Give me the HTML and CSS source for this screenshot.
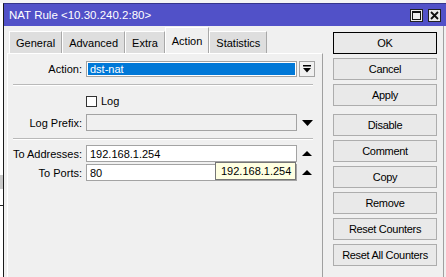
FILE: index.html
```html
<!DOCTYPE html>
<html lang="en">
<head>
    <meta charset="UTF-8">
    <meta name="viewport" content="width=device-width, initial-scale=1.0">
    <title>NAT Rule</title>
    <link rel="stylesheet" href="styles.css">
</head>
<body>
    <div class="desk">
        <div class="edge"></div>
        <div class="window">
            <div class="titlebar">
                <span class="title">NAT Rule &lt;10.30.240.2:80&gt;</span>
                <div class="winbtns">
                    <span class="wbtn">
                        <svg width="9" height="9" viewBox="0 0 9 9"><rect x="0.5" y="0.5" width="8" height="8" fill="none" stroke="#111"/><rect x="0" y="0" width="9" height="2" fill="#111"/></svg>
                    </span>
                    <span class="wbtn">
                        <svg width="9" height="9" viewBox="0 0 9 9"><path d="M1 1 L8 8 M8 1 L1 8" stroke="#111" stroke-width="1.8"/></svg>
                    </span>
                </div>
            </div>
            <div class="content">
                <div class="main">
                    <div class="tabs">
                        <div class="tab">General</div>
                        <div class="tab">Advanced</div>
                        <div class="tab">Extra</div>
                        <div class="tab active">Action</div>
                        <div class="tab">Statistics</div>
                    </div>
                    <div class="page">
                        <div class="row row-action">
                            <label class="lbl">Action:</label>
                            <div class="field select"><span class="picked">dst-nat</span></div>
                            <div class="trigger boxed">
                                <svg width="8" height="8" viewBox="0 0 8 8"><rect x="0" y="0" width="8" height="1.5" fill="#000"/><path d="M0 3 L8 3 L4 7.5 Z" fill="#000"/></svg>
                            </div>
                        </div>
                        <div class="sep sep1"></div>
                        <div class="row row-log">
                            <span class="lbl"></span>
                            <span class="check"></span>
                            <span class="check-text">Log</span>
                        </div>
                        <div class="row row-prefix">
                            <label class="lbl">Log Prefix:</label>
                            <div class="field disabled"></div>
                            <div class="trigger">
                                <svg width="11" height="6" viewBox="0 0 11 6"><path d="M0 0 L11 0 L5.5 6 Z" fill="#000"/></svg>
                            </div>
                        </div>
                        <div class="sep sep2"></div>
                        <div class="row row-addr">
                            <label class="lbl">To Addresses:</label>
                            <div class="field">192.168.1.254</div>
                            <div class="trigger">
                                <svg width="10" height="5" viewBox="0 0 10 5"><path d="M0 5 L10 5 L5 0 Z" fill="#000"/></svg>
                            </div>
                        </div>
                        <div class="row row-ports">
                            <label class="lbl">To Ports:</label>
                            <div class="field">80</div>
                            <div class="trigger">
                                <svg width="10" height="5" viewBox="0 0 10 5"><path d="M0 5 L10 5 L5 0 Z" fill="#000"/></svg>
                            </div>
                        </div>
                        <div class="tooltip">192.168.1.254</div>
                    </div>
                </div>
                <div class="side">
                    <button class="btn default">OK</button>
                    <button class="btn">Cancel</button>
                    <button class="btn">Apply</button>
                    <button class="btn gap">Disable</button>
                    <button class="btn">Comment</button>
                    <button class="btn">Copy</button>
                    <button class="btn">Remove</button>
                    <button class="btn">Reset Counters</button>
                    <button class="btn">Reset All Counters</button>
                </div>
            </div>
        </div>
    </div>
</body>
</html>
```

FILE: styles.css
```css
body {
    margin: 0;
    font-family: "Liberation Sans", Arial, sans-serif;
    font-size: 11px;
    color: #000;
    background: #fff;
    overflow: hidden;
}
.desk {
    display: flex;
    height: 277px;
    padding-top: 3px;
    box-sizing: border-box;
    background: #f4f4f4;
}
.edge {
    width: 3px;
    flex: none;
    background: linear-gradient(#fff 0, #fff 172px, #c9c9c9 172px, #c9c9c9 186px, #fff 186px, #fff 202px, #222 202px, #222 203px, #fff 203px);
}
.window {
    flex: 1;
    display: flex;
    flex-direction: column;
    border-left: 1px solid #1a1a1a;
    border-top: 1px solid #35358c;
    background: #f0f0f0;
}
.titlebar {
    height: 22px;
    flex: none;
    display: flex;
    align-items: center;
    padding: 0 5px;
    background: #5151c8;
    color: #fff;
    font-size: 11.5px;
}
.title {
    flex: 1;
}
.winbtns {
    display: flex;
    gap: 5px;
}
.wbtn {
    width: 11px;
    height: 11px;
    border: 1px solid #222;
    background: #ececec;
    display: flex;
    align-items: center;
    justify-content: center;
}
.content {
    flex: 1;
    display: flex;
    margin-right: 2px;
    border-right: 1px solid #a0a0a0;
}
.main {
    display: flex;
    flex-direction: column;
    padding-left: 3px;
}
.tabs {
    height: 27px;
    display: flex;
    align-items: flex-end;
    padding-left: 2px;
}
.tab {
    height: 22px;
    box-sizing: border-box;
    padding: 0 6px;
    display: flex;
    align-items: center;
    background: #dedede;
    border: 1px solid #fff;
    border-right-color: #a8a8a8;
    border-bottom: none;
}
.tab.active {
    height: 27px;
    padding-bottom: 1px;
    margin-bottom: -1px;
    background: #f0f0f0;
}
.page {
    position: relative;
    flex: 1;
    width: 314px;
    display: flex;
    flex-direction: column;
    border-left: 1px solid #fff;
    border-top: 1px solid #fff;
    border-right: 1px solid #a0a0a0;
    padding-top: 7px;
}
.row {
    display: flex;
    align-items: center;
    height: 17px;
}
.lbl {
    width: 74px;
    flex: none;
    text-align: right;
    margin-right: 4px;
}
.field {
    width: 211px;
    height: 17px;
    box-sizing: border-box;
    border: 1px solid #a3a3a3;
    background: #fff;
    padding-left: 3px;
    display: flex;
    align-items: center;
}
.field.disabled {
    background: #f0f0f0;
}
.field.select {
    padding: 1px;
    height: 16px;
}
.picked {
    flex: 1;
    align-self: stretch;
    background: #0078d7;
    color: #fff;
    padding-left: 2px;
    display: flex;
    align-items: center;
}
.trigger {
    width: 16px;
    height: 16px;
    margin-left: 2px;
    box-sizing: border-box;
    display: flex;
    align-items: center;
    justify-content: center;
}
.trigger.boxed {
    border: 1px solid #a3a3a3;
    background: #f0f0f0;
}
.row-action {
    height: 16px;
}
.sep {
    width: 300px;
    margin-left: 5px;
    border-top: 1px solid #b9b9b9;
    border-bottom: 1px solid #fff;
}
.sep1 {
    margin-top: 7px;
}
.row-log {
    margin-top: 9px;
    height: 12px;
}
.check {
    width: 11px;
    height: 11px;
    border: 1px solid #333;
    background: #fff;
    box-sizing: border-box;
}
.check-text {
    margin-left: 4px;
}
.row-prefix {
    margin-top: 7px;
}
.sep2 {
    margin-top: 7px;
}
.row-addr {
    margin-top: 5px;
}
.row-ports {
    margin-top: 2px;
}
.tooltip {
    position: absolute;
    left: 207px;
    top: 108px;
    width: 81px;
    height: 18px;
    box-sizing: border-box;
    border: 1px solid #767676;
    background: #ffffe1;
    padding-left: 5px;
    display: flex;
    align-items: center;
}
.side {
    display: flex;
    flex-direction: column;
    gap: 4px;
    padding-top: 6px;
    margin-left: 10px;
}
.btn {
    width: 104px;
    height: 22px;
    font-family: inherit;
    font-size: 11px;
    letter-spacing: -0.3px;
    color: #000;
    background: #e9e9e9;
    border: 1px solid #adadad;
    padding: 0;
}
.btn.default {
    border-color: #000;
}
.btn.gap {
    margin-top: 4px;
}
```
